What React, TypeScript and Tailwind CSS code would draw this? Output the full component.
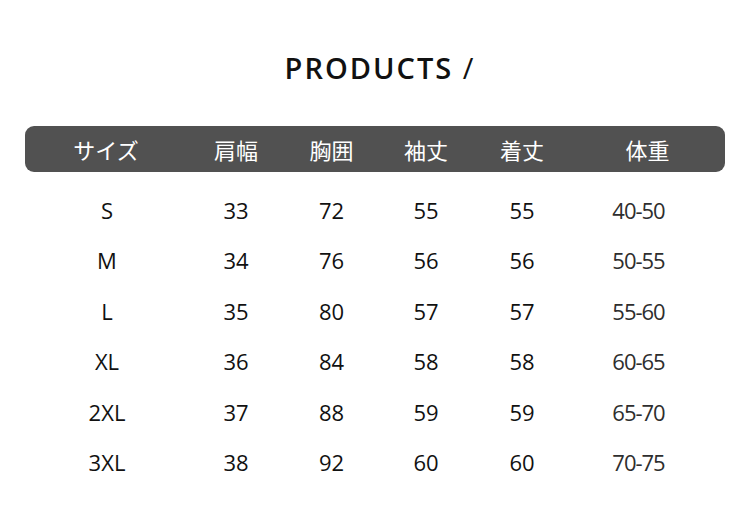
import React from 'react';

const columns = ['サイズ', '肩幅', '胸囲', '袖丈', '着丈', '体重'];

const rows = [
  ['S', '33', '72', '55', '55', '40-50'],
  ['M', '34', '76', '56', '56', '50-55'],
  ['L', '35', '80', '57', '57', '55-60'],
  ['XL', '36', '84', '58', '58', '60-65'],
  ['2XL', '37', '88', '59', '59', '65-70'],
  ['3XL', '38', '92', '60', '60', '70-75'],
];

const grid = 'grid grid-cols-[162px_98px_93px_96px_96px_155px]';

export default function App() {
  return (
    <div className="w-[750px] h-[531px] bg-white overflow-hidden">
      <div className="pt-[50px] flex justify-center">
        <h1
          className="text-[29px] leading-[36px] font-semibold tracking-[2px] text-[#111] pl-[10px]"
          style={{ fontFamily: '"Open Sans", "Noto Sans", sans-serif' }}
        >
          PRODUCTS <span className="font-normal">/</span>
        </h1>
      </div>

      <div className="mt-[40px] mx-[25px]">
        <div
          className={`${grid} h-[46px] items-center rounded-[9px] bg-[#515151] text-white text-[22px]`}
          style={{ fontFamily: '"Noto Sans CJK JP", "Noto Sans", sans-serif' }}
        >
          {columns.map((c) => (
            <div key={c} className="text-center">
              {c}
            </div>
          ))}
        </div>

        <div className="pt-[13px]" style={{ fontFamily: '"Open Sans", "Noto Sans", sans-serif' }}>
          {rows.map((r) => (
            <div key={r[0]} className={`${grid} h-[50.5px] items-center text-[22px] text-[#111]`}>
              {r.map((v, i) => (
                <div
                  key={i}
                  className={
                    i === 5
                      ? 'text-center text-[#2e2e2e] tracking-[-1px] pr-[18px]'
                      : i === 0
                      ? 'text-center pl-[2px]'
                      : 'text-center'
                  }
                >
                  {v}
                </div>
              ))}
            </div>
          ))}
        </div>
      </div>
    </div>
  );
}
